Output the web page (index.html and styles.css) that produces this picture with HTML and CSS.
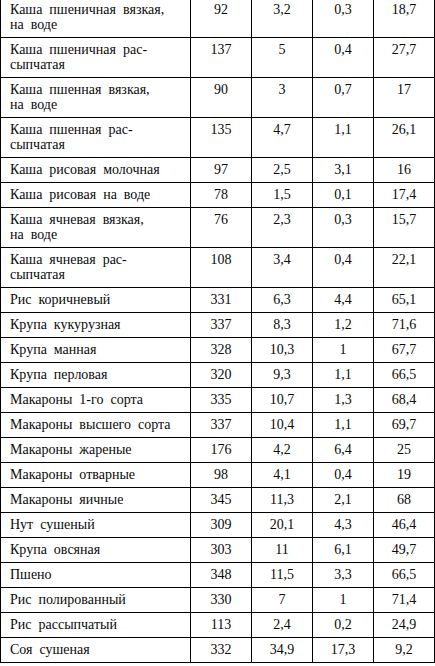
FILE: index.html
```html
<!DOCTYPE html>
<html>
<head>
<meta charset="utf-8">
<link rel="stylesheet" href="styles.css">
</head>
<body>
<div class="table">
  <div class="row dbl"><div class="c name">Каша пшеничная вязкая,<br>на воде</div><div class="c">92</div><div class="c">3,2</div><div class="c">0,3</div><div class="c">18,7</div></div>
  <div class="row dbl"><div class="c name">Каша пшеничная рас-<br>сыпчатая</div><div class="c">137</div><div class="c">5</div><div class="c">0,4</div><div class="c">27,7</div></div>
  <div class="row dbl"><div class="c name">Каша пшенная вязкая,<br>на воде</div><div class="c">90</div><div class="c">3</div><div class="c">0,7</div><div class="c">17</div></div>
  <div class="row dbl"><div class="c name">Каша пшенная рас-<br>сыпчатая</div><div class="c">135</div><div class="c">4,7</div><div class="c">1,1</div><div class="c">26,1</div></div>
  <div class="row"><div class="c name">Каша рисовая молочная</div><div class="c">97</div><div class="c">2,5</div><div class="c">3,1</div><div class="c">16</div></div>
  <div class="row"><div class="c name">Каша рисовая на воде</div><div class="c">78</div><div class="c">1,5</div><div class="c">0,1</div><div class="c">17,4</div></div>
  <div class="row dbl"><div class="c name">Каша ячневая вязкая,<br>на воде</div><div class="c">76</div><div class="c">2,3</div><div class="c">0,3</div><div class="c">15,7</div></div>
  <div class="row dbl"><div class="c name">Каша ячневая рас-<br>сыпчатая</div><div class="c">108</div><div class="c">3,4</div><div class="c">0,4</div><div class="c">22,1</div></div>
  <div class="row"><div class="c name">Рис коричневый</div><div class="c">331</div><div class="c">6,3</div><div class="c">4,4</div><div class="c">65,1</div></div>
  <div class="row"><div class="c name">Крупа кукурузная</div><div class="c">337</div><div class="c">8,3</div><div class="c">1,2</div><div class="c">71,6</div></div>
  <div class="row"><div class="c name">Крупа манная</div><div class="c">328</div><div class="c">10,3</div><div class="c">1</div><div class="c">67,7</div></div>
  <div class="row"><div class="c name">Крупа перловая</div><div class="c">320</div><div class="c">9,3</div><div class="c">1,1</div><div class="c">66,5</div></div>
  <div class="row"><div class="c name">Макароны 1-го сорта</div><div class="c">335</div><div class="c">10,7</div><div class="c">1,3</div><div class="c">68,4</div></div>
  <div class="row"><div class="c name">Макароны высшего сорта</div><div class="c">337</div><div class="c">10,4</div><div class="c">1,1</div><div class="c">69,7</div></div>
  <div class="row"><div class="c name">Макароны жареные</div><div class="c">176</div><div class="c">4,2</div><div class="c">6,4</div><div class="c">25</div></div>
  <div class="row"><div class="c name">Макароны отварные</div><div class="c">98</div><div class="c">4,1</div><div class="c">0,4</div><div class="c">19</div></div>
  <div class="row"><div class="c name">Макароны яичные</div><div class="c">345</div><div class="c">11,3</div><div class="c">2,1</div><div class="c">68</div></div>
  <div class="row"><div class="c name">Нут сушеный</div><div class="c">309</div><div class="c">20,1</div><div class="c">4,3</div><div class="c">46,4</div></div>
  <div class="row"><div class="c name">Крупа овсяная</div><div class="c">303</div><div class="c">11</div><div class="c">6,1</div><div class="c">49,7</div></div>
  <div class="row"><div class="c name">Пшено</div><div class="c">348</div><div class="c">11,5</div><div class="c">3,3</div><div class="c">66,5</div></div>
  <div class="row"><div class="c name">Рис полированный</div><div class="c">330</div><div class="c">7</div><div class="c">1</div><div class="c">71,4</div></div>
  <div class="row"><div class="c name">Рис рассыпчатый</div><div class="c">113</div><div class="c">2,4</div><div class="c">0,2</div><div class="c">24,9</div></div>
  <div class="row"><div class="c name">Соя сушеная</div><div class="c">332</div><div class="c">34,9</div><div class="c">17,3</div><div class="c">9,2</div></div>
</div>
</body>
</html>
```

FILE: styles.css
```css
html, body {
  margin: 0;
  padding: 0;
  background: #ffffff;
}

body {
  width: 435px;
  height: 666px;
  overflow: hidden;
  color: #0a0a0a;
}

.table {
  margin-top: -2px;
  width: 435px;
  font-family: "Liberation Serif", "Times New Roman", serif;
  font-size: 14px;
  line-height: 14.5px;
}

.row {
  display: grid;
  grid-template-columns: 191px 61px 61px 61px 61px;
  height: 25px;
  box-sizing: border-box;
  border-bottom: 1px solid #000000;
}

.row.dbl {
  height: 40px;
}

.c {
  box-sizing: border-box;
  border-right: 1px solid #000000;
  padding-top: 5px;
  text-align: center;
}

.c.name {
  border-left: 1px solid #000000;
  text-align: left;
  padding-left: 9px;
  padding-right: 2px;
  white-space: nowrap;
  word-spacing: 3.5px;
}
```
